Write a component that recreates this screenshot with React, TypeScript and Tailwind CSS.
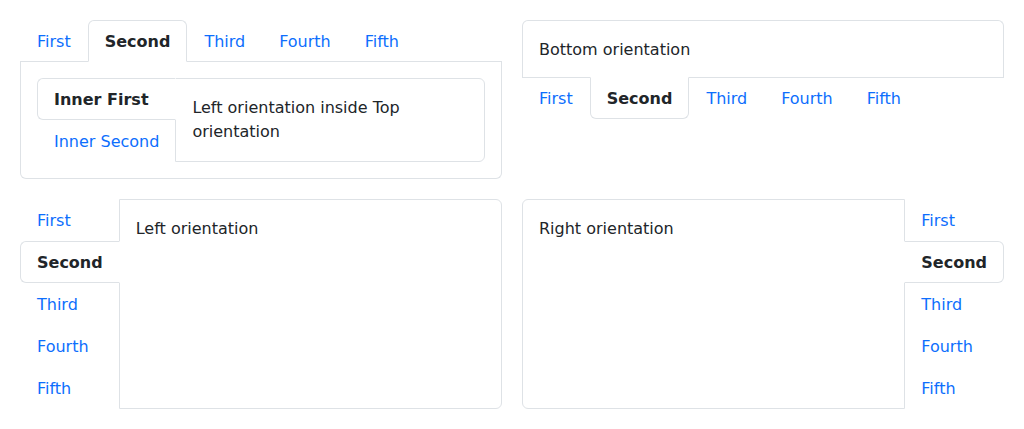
import {useState} from "react";
import clsx from "clsx";

const labels = ["First", "Second", "Third", "Fourth", "Fifth"];

type Side = "top" | "bottom" | "left" | "right";

const tabBase = "border px-4 pt-[9px] pb-[7px] text-left whitespace-nowrap leading-6 cursor-pointer";

function tabClass(side: Side, active: boolean) {
    return clsx(
        tabBase,
        side === "top" && "-mb-px rounded-t-md",
        side === "bottom" && "-mt-px rounded-b-md",
        side === "left" && "-mr-px rounded-l-md",
        side === "right" && "-ml-px rounded-r-md",
        active
            ? clsx(
                "relative z-10 bg-white font-bold text-[#212529] border-[#dee2e6]",
                side === "top" && "border-b-white",
                side === "bottom" && "border-t-white",
                side === "left" && "border-r-white",
                side === "right" && "border-l-white",
            )
            : "border-transparent text-[#0d6efd]",
    );
}

function Tabs({side, items, initial, children}: {
    side: Side;
    items: string[];
    initial: number;
    children: React.ReactNode;
}) {
    const [active, setActive] = useState(initial);
    const vertical = side === "left" || side === "right";

    const nav = (
        <div className={clsx(
            "flex",
            vertical ? "flex-col" : "flex-row",
            side === "top" && "border-b border-[#dee2e6]",
            side === "bottom" && "border-t border-[#dee2e6]",
        )}>
            {items.map((label, i) => (
                <button key={label} type="button" className={tabClass(side, i === active)}
                        onClick={() => setActive(i)}>
                    {label}
                </button>
            ))}
        </div>
    );

    const panel = (
        <div className={clsx(
            "border border-[#dee2e6] px-4 pt-[17px] pb-[15px]",
            side === "top" && "border-t-0 rounded-b-md",
            side === "bottom" && "border-b-0 rounded-t-md",
            side === "left" && "flex-1 rounded-r-md",
            side === "right" && "flex-1 rounded-l-md",
        )}>
            {children}
        </div>
    );

    return (
        <div className={clsx("flex", vertical ? "flex-row" : "flex-col")}>
            {side === "top" || side === "left" ? <>{nav}{panel}</> : <>{panel}{nav}</>}
        </div>
    );
}

export default function App() {
    return (
        <div className="bg-white min-h-screen p-5 font-['DejaVu_Sans',sans-serif] text-base leading-6 text-[#212529]">
            <div className="grid grid-cols-2 gap-5 items-start">
                <Tabs side="top" items={labels} initial={1}>
                    <div className="-mt-px mb-px">
                        <Tabs side="left" items={["Inner First", "Inner Second"]} initial={0}>
                            Left orientation inside Top orientation
                        </Tabs>
                    </div>
                </Tabs>
                <Tabs side="bottom" items={labels} initial={1}>
                    Bottom orientation
                </Tabs>
                <Tabs side="left" items={labels} initial={1}>
                    Left orientation
                </Tabs>
                <Tabs side="right" items={labels} initial={1}>
                    Right orientation
                </Tabs>
            </div>
        </div>
    );
}
